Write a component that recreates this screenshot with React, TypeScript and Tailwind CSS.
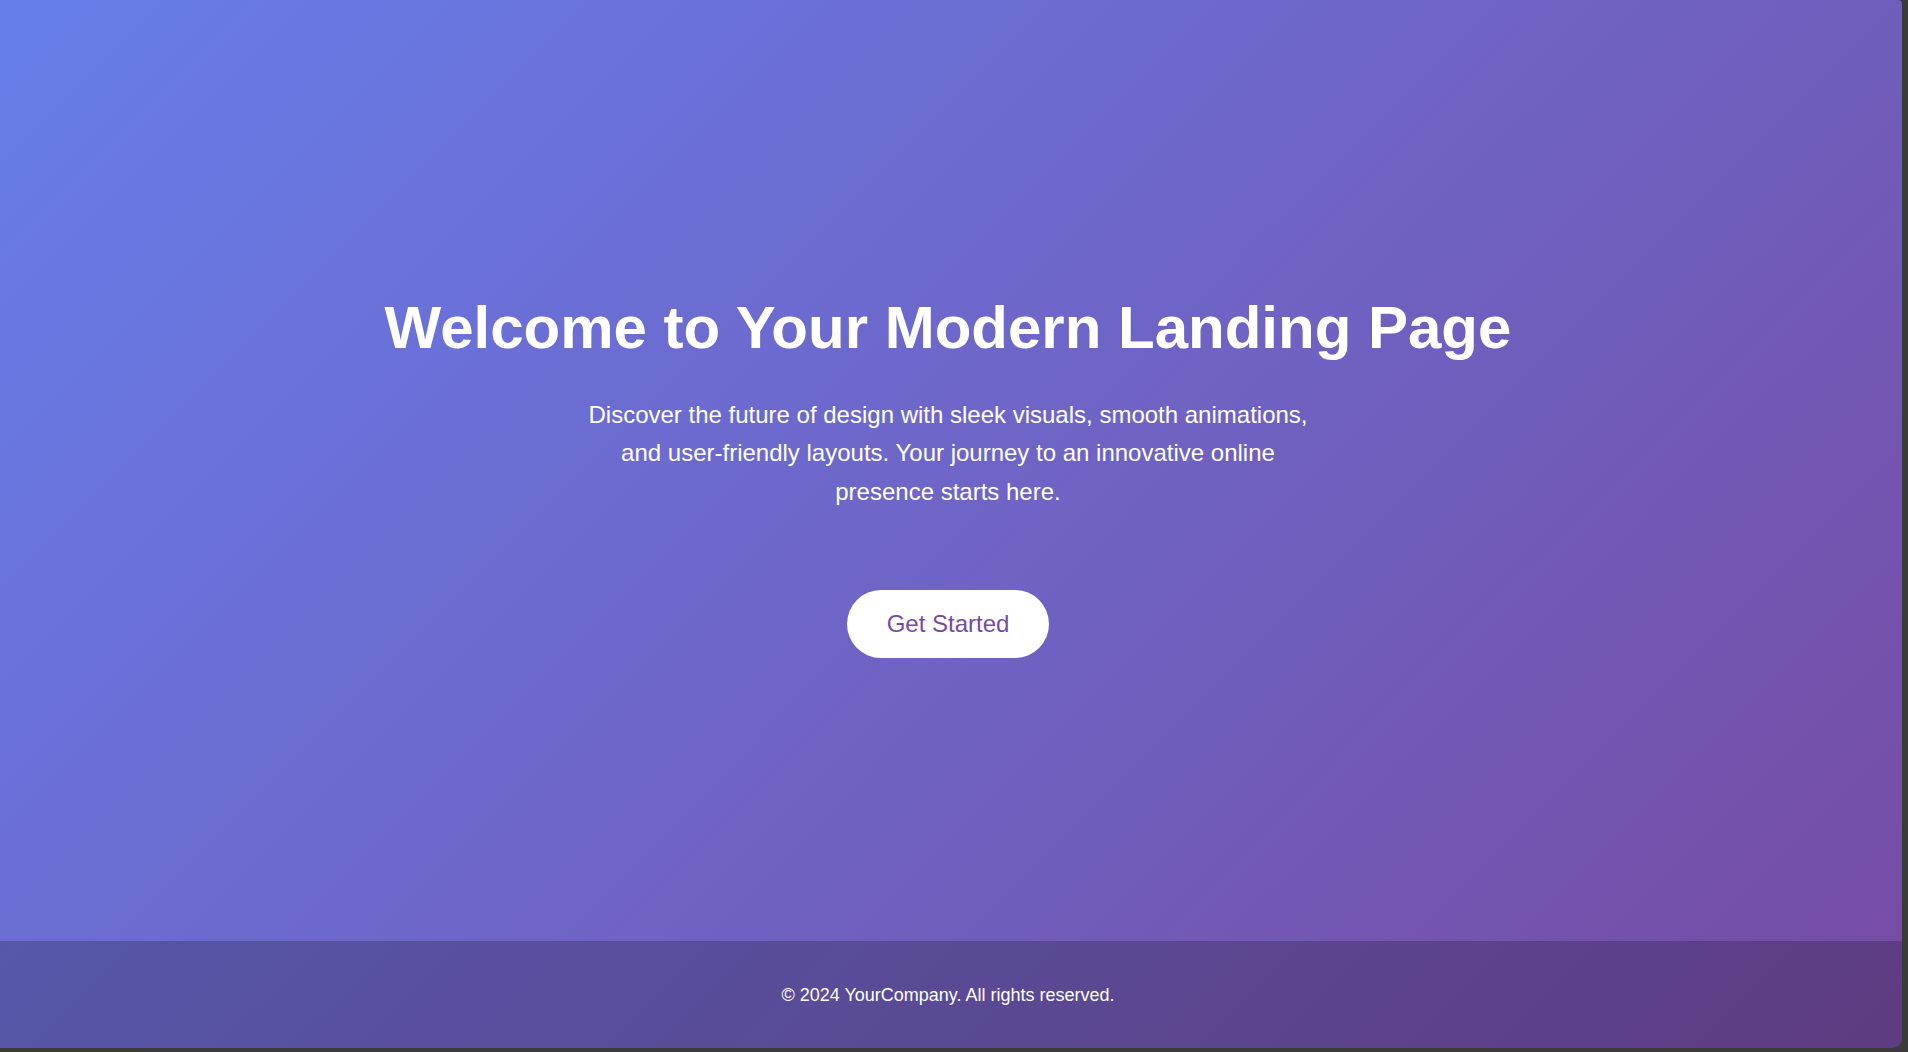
import React from "react";

export default function App() {
  return (
    <div className="w-[1908px] h-[1052px] bg-[#3b3b3b] overflow-hidden">
      <div
        className="w-[1902px] h-[1048px] rounded-br-[10px] rounded-tr-[4px] overflow-hidden flex flex-col bg-[linear-gradient(135deg,#667eea_0%,#764ba2_100%)] text-white"
        style={{ fontFamily: '"Liberation Sans", Arial, sans-serif' }}
      >
        <main className="flex-1 flex flex-col items-center justify-center pt-[15px] pr-[6px]">
          <h1 className="text-[60px] leading-none font-bold text-center">
            Welcome to Your Modern Landing Page
          </h1>
          <p className="mt-[38px] max-w-[740px] text-center text-[24px] leading-[1.6]">
            Discover the future of design with sleek visuals, smooth animations, and user-friendly layouts. Your journey to an innovative online presence starts here.
          </p>
          <button className="mt-[79px] bg-white text-[#764ba2] text-[24px] leading-[28px] px-10 py-5 rounded-full">
            Get Started
          </button>
        </main>
        <footer className="h-[107px] shrink-0 flex items-center justify-center bg-black/20 pr-[6px] pt-[1px]">
          <p className="text-[18px]">© 2024 YourCompany. All rights reserved.</p>
        </footer>
      </div>
    </div>
  );
}
